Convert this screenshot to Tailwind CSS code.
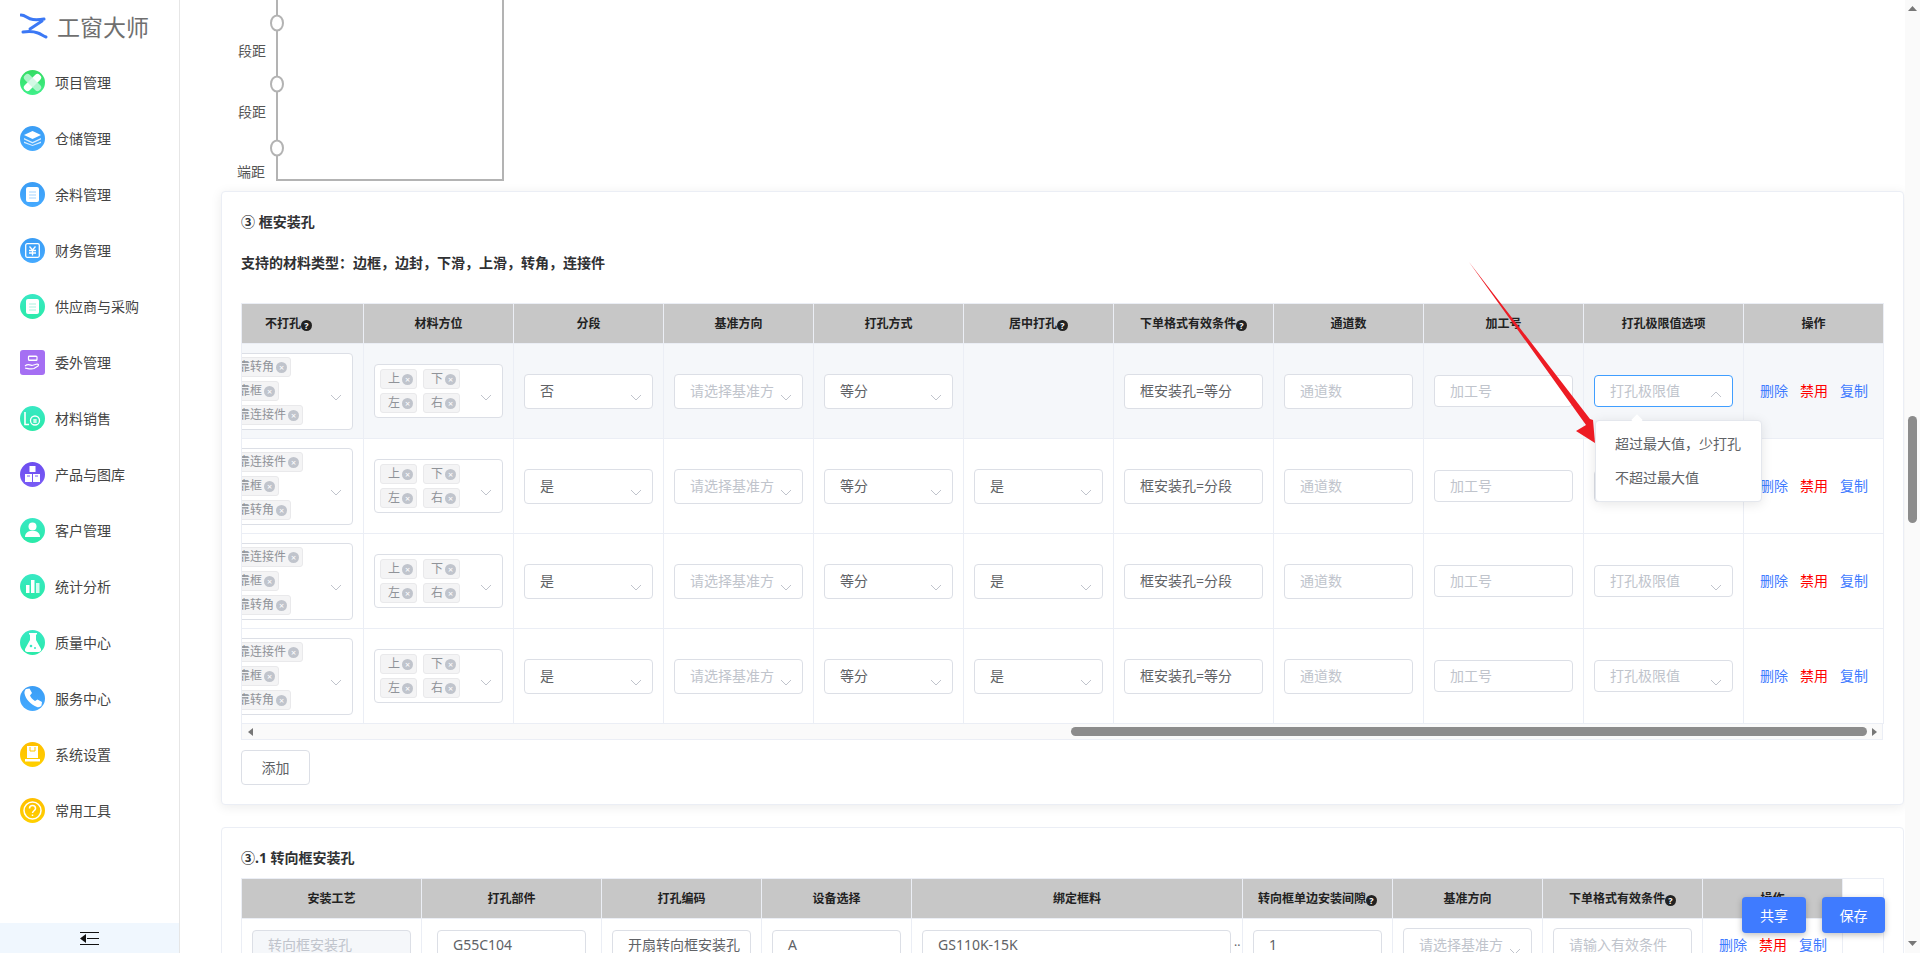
<!DOCTYPE html>
<html lang="zh-CN">
<head>
    <meta charset="UTF-8">
    <title>工窗大师</title>
    <script src="https://cdn.jsdelivr.net/npm/@tailwindcss/browser@4"></script>
</head>
<body class="[font-family:'Noto_Sans','Noto_Sans_CJK_SC',sans-serif] bg-white">
<div class="relative flex h-[953px] w-[1920px] overflow-hidden">

    <!-- sidebar -->
    <aside class="flex flex-col w-[180px] shrink-0 border-r border-[#e6e6e6] bg-white">
        <div class="flex items-center h-[54px] pl-[20px] gap-[9px]">
            <svg width="28" height="30" viewBox="0 0 28 30" fill="none" stroke="#3b78f5" stroke-width="3" stroke-linecap="round"><path d="M1 3c5 0 6 4 12 4.500 4 .3 8 0 11-.5"/><path d="M22 9L10 17"/><path d="M3 20c7-1 11-.5 15 1 3 1 5 3 8 4"/></svg>
            <span class="text-[23px] leading-none text-[#6f6f6f] whitespace-nowrap">工窗大师</span>
        </div>

        <a class="flex items-center h-[56px] pl-[20px] gap-[10px] text-[14px] text-[#444]">
            <span class="flex items-center justify-center w-[25px] h-[25px] rounded-full bg-linear-to-b from-[#35dc62] to-[#3ff08a]"><svg width="19" height="19" viewBox="0 0 19 19" fill="#fff"><rect x="6" y="-1" width="7" height="21" rx="3" transform="rotate(45 9.500 9.500)"/><rect x="6" y="-1" width="7" height="21" rx="3" opacity=".8" fill="#c9f7df" transform="rotate(-45 9.500 9.500)"/></svg></span>项目管理</a>
        <a class="flex items-center h-[56px] pl-[20px] gap-[10px] text-[14px] text-[#444]">
            <span class="flex items-center justify-center w-[25px] h-[25px] rounded-full bg-linear-to-b from-[#3a9df5] to-[#45aaff]"><svg width="17" height="15" viewBox="0 0 17 15" fill="#fff"><path d="M8.500 0L17 4 8.500 8 0 4z"/><path d="M0 7l8.500 4L17 7v1.500L8.500 12.500 0 8.500z" opacity=".8"/><path d="M0 10.500l8.500 3.500 8.500-3.500V12L8.500 15 0 12z" opacity=".8"/></svg></span>仓储管理</a>
        <a class="flex items-center h-[56px] pl-[20px] gap-[10px] text-[14px] text-[#444]">
            <span class="flex items-center justify-center w-[25px] h-[25px] rounded-full bg-linear-to-b from-[#3a9df5] to-[#45aaff]"><svg width="13" height="15" viewBox="0 0 13 15"><rect width="13" height="15" rx="2" fill="#fff"/><path d="M3 5h7M3 8h7M3 11h7" stroke="#a5d4ff"/></svg></span>余料管理</a>
        <a class="flex items-center h-[56px] pl-[20px] gap-[10px] text-[14px] text-[#444]">
            <span class="flex items-center justify-center w-[25px] h-[25px] rounded-full bg-linear-to-b from-[#3a9df5] to-[#45aaff]"><svg width="15" height="15" viewBox="0 0 15 15" fill="none" stroke="#fff" stroke-width="1.300"><rect x=".7" y=".7" width="13.600" height="13.600" rx="1.500"/><path d="M4.500 3.500l3 3.500 3-3.500M4 7.500h7M4 10h7M7.500 7v5.500"/></svg></span>财务管理</a>
        <a class="flex items-center h-[56px] pl-[20px] gap-[10px] text-[14px] text-[#444]">
            <span class="flex items-center justify-center w-[25px] h-[25px] rounded-full bg-linear-to-b from-[#38e8c4] to-[#2aeaa8]"><svg width="13" height="15" viewBox="0 0 13 15"><rect width="13" height="15" rx="2" fill="#fff"/><path d="M3 5h7M3 8h7M3 11h7" stroke="#a8f3df"/></svg></span>供应商与采购</a>
        <a class="flex items-center h-[56px] pl-[20px] gap-[10px] text-[14px] text-[#444]">
            <span class="flex items-center justify-center w-[25px] h-[25px] rounded-[3px] bg-[#a56ff3]"><svg width="17" height="15" viewBox="0 0 17 15" fill="none" stroke="#fff" stroke-width="1.200"><path d="M5 1.500h8M5 5h8"/><rect x="4.500" y="1" width="8.500" height="4.500" rx="1"/><path d="M1 11c3-2.500 5-1 7-.5l5-1.500c1.500 0 2 1 1 2l-4 2.500c-3 1-6 0-9-.5"/></svg></span>委外管理</a>
        <a class="flex items-center h-[56px] pl-[20px] gap-[10px] text-[14px] text-[#444]">
            <span class="flex items-center justify-center w-[25px] h-[25px] rounded-full bg-linear-to-b from-[#38e8c4] to-[#2aeaa8]"><svg width="17" height="15" viewBox="0 0 17 15" fill="none" stroke="#fff" stroke-width="1.600"><path d="M1 1v12.500h4"/><circle cx="11" cy="9.500" r="4.500" stroke-width="1.300"/><path d="M9 9h4M9 11h4M11 8v4" stroke-width="1"/></svg></span>材料销售</a>
        <a class="flex items-center h-[56px] pl-[20px] gap-[10px] text-[14px] text-[#444]">
            <span class="flex items-center justify-center w-[25px] h-[25px] rounded-full bg-linear-to-b from-[#6d4df0] to-[#7a5cf5]"><svg width="17" height="17" viewBox="0 0 17 17" fill="#fff"><rect x="5.500" y="0" width="6" height="6"/><rect x="1" y="8" width="7" height="8"/><rect x="9" y="8" width="7" height="8"/><path d="M3 10h3M11 10h3" stroke="#7a5cf5"/></svg></span>产品与图库</a>
        <a class="flex items-center h-[56px] pl-[20px] gap-[10px] text-[14px] text-[#444]">
            <span class="flex items-center justify-center w-[25px] h-[25px] rounded-full bg-linear-to-b from-[#38e8c4] to-[#2aeaa8]"><svg width="15" height="16" viewBox="0 0 15 16" fill="#fff"><circle cx="7.500" cy="4.500" r="4"/><path d="M0 15c0-4 3-5.500 5-6h5c2 .5 5 2 5 6z"/></svg></span>客户管理</a>
        <a class="flex items-center h-[56px] pl-[20px] gap-[10px] text-[14px] text-[#444]">
            <span class="flex items-center justify-center w-[25px] h-[25px] rounded-full bg-linear-to-b from-[#38e8c4] to-[#2aeaa8]"><svg width="14" height="13" viewBox="0 0 14 13" fill="#fff"><rect x="0" y="5" width="3.500" height="8"/><rect x="5" y="0" width="3.500" height="13"/><rect x="10" y="3" width="3.500" height="10" opacity=".8"/></svg></span>统计分析</a>
        <a class="flex items-center h-[56px] pl-[20px] gap-[10px] text-[14px] text-[#444]">
            <span class="flex items-center justify-center w-[25px] h-[25px] rounded-full bg-linear-to-b from-[#38e8c4] to-[#2aeaa8]"><svg width="16" height="19" viewBox="0 0 16 19" fill="#fff"><path d="M4 0h8v1.500h-1V7l5 9c.5 1.500-.5 3-2 3H2c-1.500 0-2.500-1.500-2-3l5-9V1.500H4z"/><circle cx="6" cy="13" r="1.300" fill="#38e8c4"/><circle cx="10" cy="15" r="1" fill="#38e8c4"/></svg></span>质量中心</a>
        <a class="flex items-center h-[56px] pl-[20px] gap-[10px] text-[14px] text-[#444]">
            <span class="flex items-center justify-center w-[25px] h-[25px] rounded-full bg-linear-to-b from-[#3a9df5] to-[#45aaff]"><svg width="20" height="20" viewBox="0 0 20 20" fill="#fff"><path d="M3 1l3.500-.5L9 5 7 7.500c.8 2 2.500 4 5 5.500l2.500-1.500L19 14l-.5 3.500c-1 1.500-3 2-4.500 1.500C8 17 2.500 11 1.500 5.500 1.200 3.500 2 2 3 1z"/></svg></span>服务中心</a>
        <a class="flex items-center h-[56px] pl-[20px] gap-[10px] text-[14px] text-[#444]">
            <span class="flex items-center justify-center w-[25px] h-[25px] rounded-full bg-linear-to-b from-[#ffbf00] to-[#ffd000]"><svg width="17" height="16" viewBox="0 0 17 16" fill="#fff"><path d="M3 0h11v12H3z"/><path d="M1 13h15v2.500H1z"/><path d="M6 1v4h5V1" fill="none" stroke="#ffc800"/></svg></span>系统设置</a>
        <a class="flex items-center h-[56px] pl-[20px] gap-[10px] text-[14px] text-[#444]">
            <span class="flex items-center justify-center w-[25px] h-[25px] rounded-full bg-linear-to-b from-[#ffbf00] to-[#ffd000]"><svg width="19" height="19" viewBox="0 0 19 19" fill="none" stroke="#fff" stroke-width="1.500"><circle cx="9.500" cy="9.500" r="8.500"/><path d="M6.500 7.500c0-4 6-4 6 0 0 2-3 2.500-3 4.500"/><path d="M9.500 13.500v1.500"/></svg></span>常用工具</a>

        <div class="flex items-center justify-center h-[30px] mt-auto bg-[#f0f7fe]">
            <svg width="19" height="13" viewBox="0 0 19 13" fill="#111"><path d="M0 6.500L6 2v9z"/><path d="M0 .5h19M7 6.500h12M0 12.500h19" stroke="#111"/></svg>
        </div>
    </aside>

    <!-- content -->
    <main class="flex-1 min-w-0 pl-[41px] pr-px overflow-hidden">
        <!-- diagram, scrolled off at the top -->
        <svg class="block ml-[9px] h-[191px]" width="290" height="191" viewBox="230 0 290 191" fill="none">
            <path d="M277 0V180H503V0" stroke="#b3b3b3" stroke-width="2"/>
            <ellipse cx="277" cy="23" rx="6" ry="7.500" fill="#fff" stroke="#b3b3b3" stroke-width="2"/>
            <ellipse cx="277" cy="84" rx="6" ry="7.500" fill="#fff" stroke="#b3b3b3" stroke-width="2"/>
            <ellipse cx="277" cy="148" rx="6" ry="7.500" fill="#fff" stroke="#b3b3b3" stroke-width="2"/>
            <text x="238" y="56" font-size="14" fill="#555">段距</text>
            <text x="238" y="117" font-size="14" fill="#555">段距</text>
            <text x="237" y="177" font-size="14" fill="#555">端距</text>
        </svg>

        <!-- ③ -->
        <section class="h-[614px] px-[19px] pt-[20px] border border-[#ebeef5] rounded-[4px] bg-white shadow-[0_2px_12px_rgba(0,0,0,0.08)]">
            <h3 class="text-[14px] leading-[20px] font-bold text-[#303133]">③ 框安装孔</h3>
            <p class="mt-[21px] text-[14px] leading-[20px] font-bold text-[#303133]">支持的材料类型：边框，边封，下滑，上滑，转角，连接件</p>

            <table class="mt-[30px] w-[1642px] table-fixed border-collapse text-[14px] [&_th]:h-[40px] [&_th]:bg-[#c7c7c7] [&_th]:border [&_th]:border-[#ebeef5] [&_th]:text-[12px] [&_th]:font-bold [&_th]:text-[#222] [&_td]:h-[95px] [&_td]:border [&_td]:border-[#ebeef5] [&_td]:px-[10px]">
                <colgroup>
                    <col class="w-[122px]"><col class="w-[150px]"><col class="w-[150px]"><col class="w-[150px]"><col class="w-[150px]"><col class="w-[150px]"><col class="w-[160px]"><col class="w-[150px]"><col class="w-[160px]"><col class="w-[160px]"><col class="w-[140px]">
                </colgroup>
                <thead>
                    <tr>
                        <th class="pr-[28px]">不打孔<span class="inline-flex items-center justify-center w-[11px] h-[11px] rounded-full bg-[#222] text-white text-[9px] leading-none align-[-1px]">?</span></th>
                        <th>材料方位</th>
                        <th>分段</th>
                        <th>基准方向</th>
                        <th>打孔方式</th>
                        <th>居中打孔<span class="inline-flex items-center justify-center w-[11px] h-[11px] rounded-full bg-[#222] text-white text-[9px] leading-none align-[-1px]">?</span></th>
                        <th>下单格式有效条件<span class="inline-flex items-center justify-center w-[11px] h-[11px] rounded-full bg-[#222] text-white text-[9px] leading-none align-[-1px]">?</span></th>
                        <th>通道数</th>
                        <th>加工号</th>
                        <th>打孔极限值选项</th>
                        <th>操作</th>
                    </tr>
                </thead>
                <tbody class="text-[#606266] [&_.tag]:inline-flex [&_.tag]:items-center [&_.tag]:w-fit [&_.tag]:h-[20px] [&_.tag]:pl-[7px] [&_.tag]:pr-[3px] [&_.tag]:gap-[2px] [&_.tag]:rounded-[3px] [&_.tag]:border [&_.tag]:border-[#e9e9eb] [&_.tag]:bg-[#f4f4f5] [&_.tag]:text-[12px] [&_.tag]:text-[#909399] [&_.tag]:whitespace-nowrap [&_i]:flex [&_i]:items-center [&_i]:justify-center [&_i]:w-[11px] [&_i]:h-[11px] [&_i]:rounded-full [&_i]:bg-[#c0c4cc] [&_i]:text-white [&_i]:text-[9px] [&_i]:not-italic [&_i]:leading-none [&_.box]:flex [&_.box]:items-center [&_.box]:h-[35px] [&_.box]:pl-[15px] [&_.box]:pr-[10px] [&_.box]:pb-[2px] [&_.box]:border [&_.box]:border-[#dcdfe6] [&_.box]:rounded-[4px] [&_.box]:bg-white [&_.box]:whitespace-nowrap [&_.box]:overflow-hidden [&_.short]:h-[32px]! [&_.ph]:text-[#c0c4cc] [&_.multi]:flex [&_.multi]:items-center [&_.multi]:pl-[5px] [&_.multi]:pr-[10px] [&_.multi]:border [&_.multi]:border-[#dcdfe6] [&_.multi]:rounded-[4px] [&_.multi]:bg-white [&_.chev]:ml-auto [&_.chev]:mt-[14px] [&_.chev]:shrink-0 [&_.multi_.chev]:mt-[12px] [&_.ops]:flex [&_.ops]:gap-[12px] [&_.ops]:pl-[6px] [&_.ops]:pb-[2px] [&_.ops]:text-[#3f7bff] [&_b]:font-normal [&_b]:text-[#ff0000]">
                    <tr class="bg-[#f5f7fa]">
                        <td class="overflow-hidden !pl-0">
                            <div class="multi h-[77px] w-[129px] ml-[-18px]"><div class="flex flex-col gap-[4px]"><span class="tag">靠转角<i>×</i></span><span class="tag">靠框<i>×</i></span><span class="tag">靠连接件<i>×</i></span></div><svg class="chev" width="12" height="7" viewBox="0 0 12 7" fill="none" stroke="#c0c4cc"><path d="M1 1l5 5 5-5"/></svg></div>
                        </td>
                        <td>
                            <div class="multi h-[54px]"><div class="grid grid-cols-2 gap-x-[6px] gap-y-[4px]"><span class="tag">上<i>×</i></span><span class="tag">下<i>×</i></span><span class="tag">左<i>×</i></span><span class="tag">右<i>×</i></span></div><svg class="chev" width="12" height="7" viewBox="0 0 12 7" fill="none" stroke="#c0c4cc"><path d="M1 1l5 5 5-5"/></svg></div>
                        </td>
                        <td><div class="box">否<svg class="chev" width="12" height="7" viewBox="0 0 12 7" fill="none" stroke="#c0c4cc"><path d="M1 1l5 5 5-5"/></svg></div></td>
                        <td><div class="box"><span class="ph w-[84px] overflow-hidden">请选择基准方向</span><svg class="chev" width="12" height="7" viewBox="0 0 12 7" fill="none" stroke="#c0c4cc"><path d="M1 1l5 5 5-5"/></svg></div></td>
                        <td><div class="box">等分<svg class="chev" width="12" height="7" viewBox="0 0 12 7" fill="none" stroke="#c0c4cc"><path d="M1 1l5 5 5-5"/></svg></div></td>
                        <td></td>
                        <td><div class="box">框安装孔=等分</div></td>
                        <td><div class="box ph">通道数</div></td>
                        <td><div class="box short ph">加工号</div></td>
                        <td><div class="box short ph !border-[#409eff]">打孔极限值<svg class="ml-auto mt-[8px] shrink-0" width="12" height="7" viewBox="0 0 12 7" fill="none" stroke="#c0c4cc"><path d="M1 6l5-5 5 5"/></svg></div></td>
                        <td><div class="ops"><span>删除</span><b>禁用</b><span>复制</span></div></td>
                    </tr>
                    <tr>
                        <td class="overflow-hidden !pl-0">
                            <div class="multi h-[77px] w-[129px] ml-[-18px]"><div class="flex flex-col gap-[4px]"><span class="tag">靠连接件<i>×</i></span><span class="tag">靠框<i>×</i></span><span class="tag">靠转角<i>×</i></span></div><svg class="chev" width="12" height="7" viewBox="0 0 12 7" fill="none" stroke="#c0c4cc"><path d="M1 1l5 5 5-5"/></svg></div>
                        </td>
                        <td>
                            <div class="multi h-[54px]"><div class="grid grid-cols-2 gap-x-[6px] gap-y-[4px]"><span class="tag">上<i>×</i></span><span class="tag">下<i>×</i></span><span class="tag">左<i>×</i></span><span class="tag">右<i>×</i></span></div><svg class="chev" width="12" height="7" viewBox="0 0 12 7" fill="none" stroke="#c0c4cc"><path d="M1 1l5 5 5-5"/></svg></div>
                        </td>
                        <td><div class="box">是<svg class="chev" width="12" height="7" viewBox="0 0 12 7" fill="none" stroke="#c0c4cc"><path d="M1 1l5 5 5-5"/></svg></div></td>
                        <td><div class="box"><span class="ph w-[84px] overflow-hidden">请选择基准方向</span><svg class="chev" width="12" height="7" viewBox="0 0 12 7" fill="none" stroke="#c0c4cc"><path d="M1 1l5 5 5-5"/></svg></div></td>
                        <td><div class="box">等分<svg class="chev" width="12" height="7" viewBox="0 0 12 7" fill="none" stroke="#c0c4cc"><path d="M1 1l5 5 5-5"/></svg></div></td>
                        <td><div class="box">是<svg class="chev" width="12" height="7" viewBox="0 0 12 7" fill="none" stroke="#c0c4cc"><path d="M1 1l5 5 5-5"/></svg></div></td>
                        <td><div class="box">框安装孔=分段</div></td>
                        <td><div class="box ph">通道数</div></td>
                        <td><div class="box short ph">加工号</div></td>
                        <td><div class="box short ph">打孔极限值<svg class="chev" width="12" height="7" viewBox="0 0 12 7" fill="none" stroke="#c0c4cc"><path d="M1 1l5 5 5-5"/></svg></div></td>
                        <td><div class="ops"><span>删除</span><b>禁用</b><span>复制</span></div></td>
                    </tr>
                    <tr>
                        <td class="overflow-hidden !pl-0">
                            <div class="multi h-[77px] w-[129px] ml-[-18px]"><div class="flex flex-col gap-[4px]"><span class="tag">靠连接件<i>×</i></span><span class="tag">靠框<i>×</i></span><span class="tag">靠转角<i>×</i></span></div><svg class="chev" width="12" height="7" viewBox="0 0 12 7" fill="none" stroke="#c0c4cc"><path d="M1 1l5 5 5-5"/></svg></div>
                        </td>
                        <td>
                            <div class="multi h-[54px]"><div class="grid grid-cols-2 gap-x-[6px] gap-y-[4px]"><span class="tag">上<i>×</i></span><span class="tag">下<i>×</i></span><span class="tag">左<i>×</i></span><span class="tag">右<i>×</i></span></div><svg class="chev" width="12" height="7" viewBox="0 0 12 7" fill="none" stroke="#c0c4cc"><path d="M1 1l5 5 5-5"/></svg></div>
                        </td>
                        <td><div class="box">是<svg class="chev" width="12" height="7" viewBox="0 0 12 7" fill="none" stroke="#c0c4cc"><path d="M1 1l5 5 5-5"/></svg></div></td>
                        <td><div class="box"><span class="ph w-[84px] overflow-hidden">请选择基准方向</span><svg class="chev" width="12" height="7" viewBox="0 0 12 7" fill="none" stroke="#c0c4cc"><path d="M1 1l5 5 5-5"/></svg></div></td>
                        <td><div class="box">等分<svg class="chev" width="12" height="7" viewBox="0 0 12 7" fill="none" stroke="#c0c4cc"><path d="M1 1l5 5 5-5"/></svg></div></td>
                        <td><div class="box">是<svg class="chev" width="12" height="7" viewBox="0 0 12 7" fill="none" stroke="#c0c4cc"><path d="M1 1l5 5 5-5"/></svg></div></td>
                        <td><div class="box">框安装孔=分段</div></td>
                        <td><div class="box ph">通道数</div></td>
                        <td><div class="box short ph">加工号</div></td>
                        <td><div class="box short ph">打孔极限值<svg class="chev" width="12" height="7" viewBox="0 0 12 7" fill="none" stroke="#c0c4cc"><path d="M1 1l5 5 5-5"/></svg></div></td>
                        <td><div class="ops"><span>删除</span><b>禁用</b><span>复制</span></div></td>
                    </tr>
                    <tr>
                        <td class="overflow-hidden !pl-0">
                            <div class="multi h-[77px] w-[129px] ml-[-18px]"><div class="flex flex-col gap-[4px]"><span class="tag">靠连接件<i>×</i></span><span class="tag">靠框<i>×</i></span><span class="tag">靠转角<i>×</i></span></div><svg class="chev" width="12" height="7" viewBox="0 0 12 7" fill="none" stroke="#c0c4cc"><path d="M1 1l5 5 5-5"/></svg></div>
                        </td>
                        <td>
                            <div class="multi h-[54px]"><div class="grid grid-cols-2 gap-x-[6px] gap-y-[4px]"><span class="tag">上<i>×</i></span><span class="tag">下<i>×</i></span><span class="tag">左<i>×</i></span><span class="tag">右<i>×</i></span></div><svg class="chev" width="12" height="7" viewBox="0 0 12 7" fill="none" stroke="#c0c4cc"><path d="M1 1l5 5 5-5"/></svg></div>
                        </td>
                        <td><div class="box">是<svg class="chev" width="12" height="7" viewBox="0 0 12 7" fill="none" stroke="#c0c4cc"><path d="M1 1l5 5 5-5"/></svg></div></td>
                        <td><div class="box"><span class="ph w-[84px] overflow-hidden">请选择基准方向</span><svg class="chev" width="12" height="7" viewBox="0 0 12 7" fill="none" stroke="#c0c4cc"><path d="M1 1l5 5 5-5"/></svg></div></td>
                        <td><div class="box">等分<svg class="chev" width="12" height="7" viewBox="0 0 12 7" fill="none" stroke="#c0c4cc"><path d="M1 1l5 5 5-5"/></svg></div></td>
                        <td><div class="box">是<svg class="chev" width="12" height="7" viewBox="0 0 12 7" fill="none" stroke="#c0c4cc"><path d="M1 1l5 5 5-5"/></svg></div></td>
                        <td><div class="box">框安装孔=等分</div></td>
                        <td><div class="box ph">通道数</div></td>
                        <td><div class="box short ph">加工号</div></td>
                        <td><div class="box short ph">打孔极限值<svg class="chev" width="12" height="7" viewBox="0 0 12 7" fill="none" stroke="#c0c4cc"><path d="M1 1l5 5 5-5"/></svg></div></td>
                        <td><div class="ops"><span>删除</span><b>禁用</b><span>复制</span></div></td>
                    </tr>
                </tbody>
            </table>

            <!-- table scrollbar -->
            <div class="flex items-center h-[16px] w-[1642px] pl-[6px] pr-[5px] bg-[#fafafa] border-x border-b border-[#ebeef5]">
                <svg width="5" height="8" viewBox="0 0 5 8" fill="#777"><path d="M5 0v8L0 4z"/></svg>
                <div class="ml-auto mr-[5px] w-[796px] h-[9px] rounded-full bg-[#8c8c8c]"></div>
                <svg width="5" height="8" viewBox="0 0 5 8" fill="#777"><path d="M0 0v8l5-4z"/></svg>
            </div>

            <button class="mt-[10px] w-[69px] h-[35px] border border-[#dcdfe6] rounded-[4px] bg-white text-[14px] text-[#606266]">添加</button>
        </section>

        <!-- ③.1 -->
        <section class="mt-[22px] h-[300px] px-[19px] pt-[20px] border border-[#ebeef5] rounded-[4px] bg-white">
            <h3 class="text-[14px] leading-[20px] font-bold text-[#303133]">③.1 转向框安装孔</h3>
            <table class="mt-[10px] w-[1642px] table-fixed border-collapse text-[14px] text-[#606266] [&_th]:h-[40px] [&_th]:bg-[#c7c7c7] [&_th]:border [&_th]:border-[#ebeef5] [&_th]:text-[12px] [&_th]:font-bold [&_th]:text-[#222] [&_td]:h-[54px] [&_td]:border [&_td]:border-[#ebeef5] [&_td]:px-[10px] [&_.box]:flex [&_.box]:items-center [&_.box]:h-[35px] [&_.box]:pl-[15px] [&_.box]:pr-[10px] [&_.box]:pb-[2px] [&_.box]:border [&_.box]:border-[#dcdfe6] [&_.box]:rounded-[4px] [&_.box]:bg-white [&_.box]:whitespace-nowrap [&_.box]:overflow-hidden [&_.short]:h-[32px]! [&_.ph]:text-[#c0c4cc]">
                <colgroup>
                    <col class="w-[180px]"><col class="w-[180px]"><col class="w-[160px]"><col class="w-[150px]"><col class="w-[331px]"><col class="w-[150px]"><col class="w-[150px]"><col class="w-[160px]"><col class="w-[140px]"><col class="w-[41px]">
                </colgroup>
                <thead>
                    <tr>
                        <th>安装工艺</th>
                        <th>打孔部件</th>
                        <th>打孔编码</th>
                        <th>设备选择</th>
                        <th>绑定框料</th>
                        <th>转向框单边安装间隙<span class="inline-flex items-center justify-center w-[11px] h-[11px] rounded-full bg-[#222] text-white text-[9px] leading-none align-[-1px]">?</span></th>
                        <th>基准方向</th>
                        <th>下单格式有效条件<span class="inline-flex items-center justify-center w-[11px] h-[11px] rounded-full bg-[#222] text-white text-[9px] leading-none align-[-1px]">?</span></th>
                        <th>操作</th>
                        <th class="!bg-white"></th>
                    </tr>
                </thead>
                <tbody>
                    <tr>
                        <td><div class="box short ph !bg-[#f5f7fa]">转向框安装孔</div></td>
                        <td class="!px-[15px]"><div class="box short">G55C104</div></td>
                        <td><div class="box short">开扇转向框安装孔</div></td>
                        <td><div class="box short">A</div></td>
                        <td><div class="flex items-center"><div class="box short w-[309px] shrink-0">GS110K-15K</div><span class="ml-[3px] text-[12px] leading-none text-[#606266]">··</span></div></td>
                        <td><div class="box short">1</div></td>
                        <td><div class="box"><span class="ph w-[84px] overflow-hidden">请选择基准方向</span><svg class="ml-auto mt-[14px] shrink-0" width="12" height="7" viewBox="0 0 12 7" fill="none" stroke="#c0c4cc"><path d="M1 1l5 5 5-5"/></svg></div></td>
                        <td><div class="box ph">请输入有效条件</div></td>
                        <td><div class="flex gap-[12px] pl-[6px] pb-[2px] text-[#3f7bff]"><span>删除</span><span class="text-[#ff0000]">禁用</span><span>复制</span></div></td>
                        <td></td>
                    </tr>
                </tbody>
            </table>
        </section>
    </main>

    <!-- page scrollbar -->
    <div class="flex flex-col items-center w-[15px] shrink-0 bg-[#fafafa]">
        <svg class="mt-[6px]" width="9" height="5" viewBox="0 0 9 5" fill="#777"><path d="M4.500 0L9 5H0z"/></svg>
        <div class="mt-[405px] w-[9px] h-[107px] rounded-full bg-[#8c8c8c]"></div>
        <svg class="mt-auto mb-[7px]" width="9" height="5" viewBox="0 0 9 5" fill="#777"><path d="M0 0h9L4.500 5z"/></svg>
    </div>

    <!-- dropdown opened from the 打孔极限值 select -->
    <div class="absolute left-[1595px] top-[420px] w-[167px] py-[6px] rounded-[4px] border border-[#e4e7ed] bg-white shadow-[0_2px_12px_rgba(0,0,0,0.1)] text-[14px] text-[#606266]">
        <div class="absolute left-[37px] top-[-5px] w-[8px] h-[8px] rotate-45 bg-white"></div>
        <div class="flex items-center h-[34px] pl-[19px] pb-[2px] whitespace-nowrap">超过最大值，少打孔</div>
        <div class="flex items-center h-[34px] pl-[19px] pb-[2px] whitespace-nowrap">不超过最大值</div>
    </div>

    <!-- red annotation arrow -->
    <svg class="absolute left-0 top-0 pointer-events-none" width="1920" height="953" viewBox="0 0 1920 953">
        <path d="M1469 262L1590 419L1593 420L1595 443L1576 431L1586 425Z" fill="#ed1c24"/>
    </svg>

    <!-- floating buttons -->
    <div class="absolute left-[1742px] top-[897px] flex gap-[16px] text-[14px] text-white">
        <button class="w-[64px] h-[36px] rounded-[4px] bg-[#3f7bff] shadow-[0_2px_6px_rgba(0,0,0,0.25)]">共享</button>
        <button class="w-[63px] h-[36px] rounded-[4px] bg-[#3f7bff] shadow-[0_2px_6px_rgba(0,0,0,0.25)]">保存</button>
    </div>
</div>
</body>
</html>
